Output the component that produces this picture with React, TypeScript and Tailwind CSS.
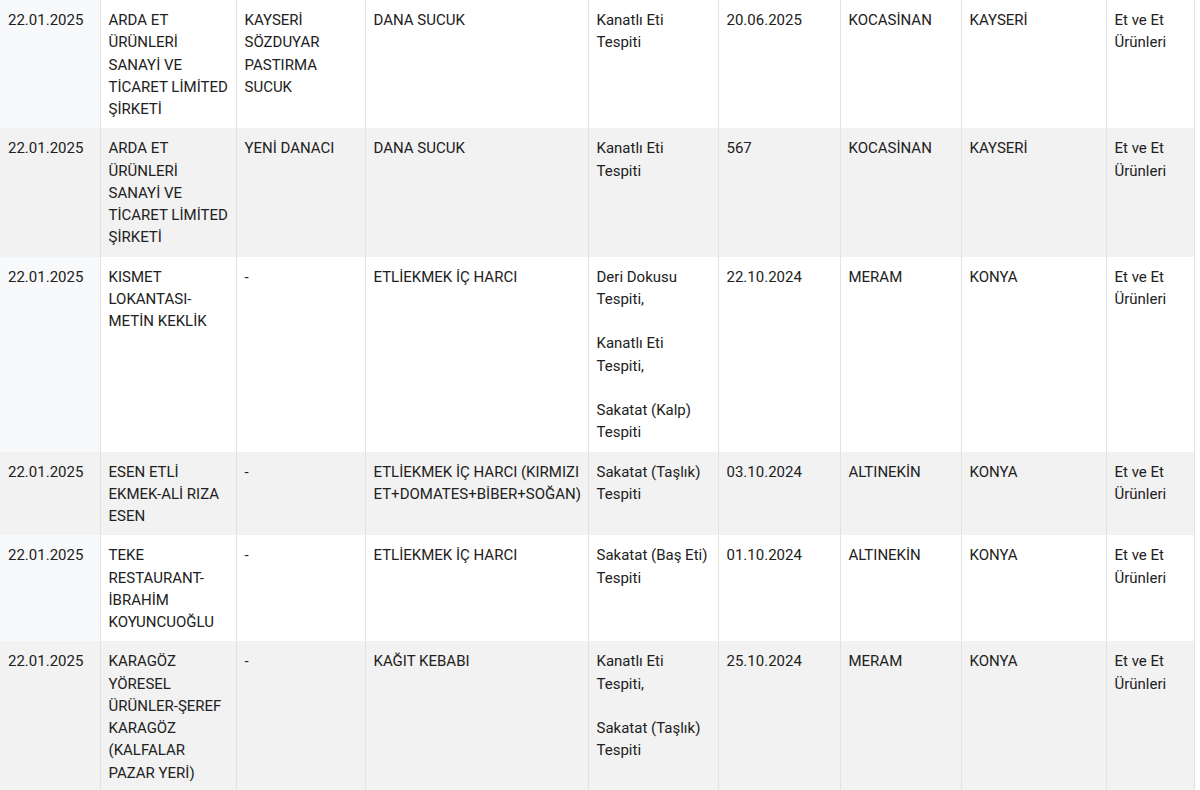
import React from "react";

type Row = string[][];

const rows: Row[] = [
  [
    ["22.01.2025"],
    ["ARDA ET ÜRÜNLERİ SANAYİ VE TİCARET LİMİTED ŞİRKETİ"],
    ["KAYSERİ SÖZDUYAR PASTIRMA SUCUK"],
    ["DANA SUCUK"],
    ["Kanatlı Eti Tespiti"],
    ["20.06.2025"],
    ["KOCASİNAN"],
    ["KAYSERİ"],
    ["Et ve Et Ürünleri"],
  ],
  [
    ["22.01.2025"],
    ["ARDA ET ÜRÜNLERİ SANAYİ VE TİCARET LİMİTED ŞİRKETİ"],
    ["YENİ DANACI"],
    ["DANA SUCUK"],
    ["Kanatlı Eti Tespiti"],
    ["567"],
    ["KOCASİNAN"],
    ["KAYSERİ"],
    ["Et ve Et Ürünleri"],
  ],
  [
    ["22.01.2025"],
    ["KISMET LOKANTASI-METİN KEKLİK"],
    ["-"],
    ["ETLİEKMEK İÇ HARCI"],
    ["Deri Dokusu Tespiti,", "Kanatlı Eti Tespiti,", "Sakatat (Kalp) Tespiti"],
    ["22.10.2024"],
    ["MERAM"],
    ["KONYA"],
    ["Et ve Et Ürünleri"],
  ],
  [
    ["22.01.2025"],
    ["ESEN ETLİ EKMEK-ALİ RIZA ESEN"],
    ["-"],
    ["ETLİEKMEK İÇ HARCI (KIRMIZI ET+DOMATES+BİBER+SOĞAN)"],
    ["Sakatat (Taşlık) Tespiti"],
    ["03.10.2024"],
    ["ALTINEKİN"],
    ["KONYA"],
    ["Et ve Et Ürünleri"],
  ],
  [
    ["22.01.2025"],
    ["TEKE RESTAURANT-İBRAHİM KOYUNCUOĞLU"],
    ["-"],
    ["ETLİEKMEK İÇ HARCI"],
    ["Sakatat (Baş Eti) Tespiti"],
    ["01.10.2024"],
    ["ALTINEKİN"],
    ["KONYA"],
    ["Et ve Et Ürünleri"],
  ],
  [
    ["22.01.2025"],
    ["KARAGÖZ YÖRESEL ÜRÜNLER-ŞEREF KARAGÖZ (KALFALAR PAZAR YERİ)"],
    ["-"],
    ["KAĞIT KEBABI"],
    ["Kanatlı Eti Tespiti,", "Sakatat (Taşlık) Tespiti"],
    ["25.10.2024"],
    ["MERAM"],
    ["KONYA"],
    ["Et ve Et Ürünleri"],
  ],
];

const widths = [
  "w-[100px]",
  "w-[136px]",
  "w-[129px]",
  "w-[223px]",
  "w-[130px]",
  "w-[122px]",
  "w-[121px]",
  "w-[145px]",
  "w-[88px]",
];

export default function App() {
  return (
    <div
      className="w-[1200px] h-[790px] overflow-hidden bg-white"
      style={{ fontFamily: "Roboto, 'Noto Sans', Arial, sans-serif" }}
    >
      <table className="table-fixed border-collapse w-[1194px] text-[15px] leading-[22.25px] text-[#212121]">
        <colgroup>
          {widths.map((w, i) => (
            <col key={i} className={w} />
          ))}
        </colgroup>
        <tbody>
          {rows.map((row, ri) => {
            const gray = ri % 2 === 1;
            return (
              <tr key={ri} className={gray ? "bg-[#f2f2f2]" : "bg-white"}>
                {row.map((cell, ci) => (
                  <td
                    key={ci}
                    className={
                      "align-top pl-[8px] pt-[9px] pb-[8px] border-r border-[#e2e2e2] " +
                      (ci === 4 ? "pr-[10px] " : "pr-[4px] ") +
                      (ci === 0 && !gray ? "bg-[#f8f9fb]" : "")
                    }
                  >
                    {cell.map((p, pi) => (
                      <div key={pi} className={pi > 0 ? "mt-[22.25px]" : ""}>
                        {p}
                      </div>
                    ))}
                  </td>
                ))}
              </tr>
            );
          })}
        </tbody>
      </table>
    </div>
  );
}
